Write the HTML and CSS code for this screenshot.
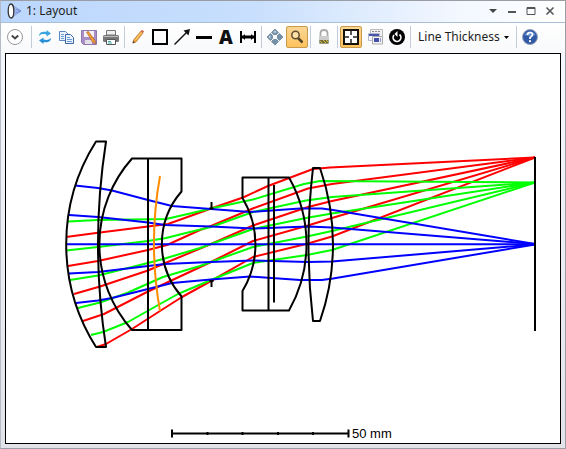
FILE: index.html
```html
<!doctype html>
<html lang="en">
<head>
  <meta charset="utf-8">
  <title>1: Layout</title>
  <link rel="stylesheet" href="styles.css">
</head>
<body>
<div class="window">
  <header class="title-bar">
    <svg class="title-icon" width="16" height="18" viewBox="0 0 16 18" fill="none">
      <path d="M6 3L15 9L6 15M6 6L15 9L6 12M6 9H15" stroke="#7d92d8"/>
      <ellipse cx="5" cy="9" rx="2.800" ry="7" fill="#fff" stroke="#333" stroke-width="1.300"/>
    </svg>
    <h1 class="title">1: Layout</h1>
    <div class="window-buttons">
      <button type="button" aria-label="Window menu"><svg width="10" height="10"><path d="M1 3H9L5 7Z" fill="#444"/></svg></button>
      <button type="button" aria-label="Minimize"><svg width="10" height="10"><path d="M1 6H9" stroke="#555" stroke-width="2"/></svg></button>
      <button type="button" aria-label="Maximize"><svg width="10" height="10"><path d="M1 1.500H9V8.500H1ZM1 2.500H9" fill="none" stroke="#555"/></svg></button>
      <button type="button" aria-label="Close"><svg width="10" height="10"><path d="M1.500 1.500L8.500 8.500M8.500 1.500L1.500 8.500" stroke="#555" stroke-width="1.600"/></svg></button>
    </div>
  </header>

  <div class="toolbar" role="toolbar">
    <button type="button" class="tool expand" aria-label="Settings">
      <svg viewBox="0 0 18 18"><circle cx="9" cy="9" r="7.500" fill="#fff" stroke="#999"/><path d="M5.800 7.500L9 10.500L12.200 7.500" fill="none" stroke="#444" stroke-width="2"/></svg>
    </button>
    <span class="separator"></span>
    <button type="button" class="tool" aria-label="Update">
      <svg viewBox="0 0 18 18"><path d="M3 8C3 4 7 3 10.500 4V2L15 5.500L10.500 8.500V6.500C7 5.500 5 6 3 8Z" fill="#3aa5e0"/><path d="M15 10C15 14 11 15 7.500 14V16L3 12.500L7.500 9.500V11.500C11 12.500 13 12 15 10Z" fill="#2a90d5"/></svg>
    </button>
    <button type="button" class="tool" aria-label="Copy">
      <svg viewBox="0 0 18 18"><g fill="#e9f2fd" stroke="#5b88c4"><path d="M1.500 3.500H7.500L10.500 6.500V12.500H1.500Z"/><path d="M7.500 6.500H12.500L15.500 9.500V15.500H7.500Z" stroke="#3c68aa"/></g><path d="M3 6.500H6M3 8.500H6M3 10.500H6M9 9.500H12M9 11.500H14M9 13.500H14" stroke="#6b9ad5"/></svg>
    </button>
    <button type="button" class="tool" aria-label="Save">
      <svg viewBox="0 0 18 18"><path d="M1.500 2.500H16.500V16.500H3.500L1.500 14.500Z" fill="#a98fc6" stroke="#8f78ae"/><path d="M4 3H14V9H4Z" fill="#f4f0f8"/><path d="M5 12H12V16H5Z" fill="#e4e0e8"/><path d="M6.500 4L8.500 3.500L15 12.500L15.500 16L12.500 14Z" fill="#f39c35" stroke="#a35c26" stroke-width=".6"/></svg>
    </button>
    <button type="button" class="tool" aria-label="Print">
      <svg viewBox="0 0 18 18"><path d="M4.500 2.500H13.500V7H4.500Z" fill="#eee" stroke="#777"/><rect x="1" y="7" width="16" height="7" rx="1.500" fill="#777"/><path d="M2 8.500H16" stroke="#bbb"/><path d="M4.500 11.500H13.500V16.500H4.500Z" fill="#fff" stroke="#555"/><path d="M6 13.500H9M6 15H10" stroke="#3fa9a5"/></svg>
    </button>
    <span class="separator"></span>
    <button type="button" class="tool" aria-label="Pencil">
      <svg viewBox="0 0 18 18"><path d="M4.500 12L12 3L14 5L7 14L4 15Z" fill="#f4a63a" stroke="#a87034" stroke-width=".7"/><path d="M12 3L14 5L15 3.500Q14 1.500 12.700 2Z" fill="#d7654c"/><path d="M4.300 13L5.800 14.300L3.500 15.500Z" fill="#333"/><path d="M6.500 12L12.500 4.500" stroke="#ffd580"/></svg>
    </button>
    <button type="button" class="tool" aria-label="Rectangle">
      <svg viewBox="0 0 18 18"><path d="M2 2H16V16H2Z" fill="none" stroke="#000" stroke-width="2"/></svg>
    </button>
    <button type="button" class="tool" aria-label="Arrow">
      <svg viewBox="0 0 18 18"><path d="M1.500 16.500L14 4" stroke="#111" stroke-width="1.500"/><path d="M17 1L15.500 7.500L10.500 2.500Z" fill="#111"/></svg>
    </button>
    <button type="button" class="tool" aria-label="Line">
      <svg viewBox="0 0 18 18"><path d="M1 9.500H17" stroke="#000" stroke-width="3"/></svg>
    </button>
    <button type="button" class="tool letter">A</button>
    <button type="button" class="tool" aria-label="Dimension">
      <svg viewBox="0 0 18 18"><path d="M2 3V15M16 3V15" stroke="#000" stroke-width="2"/><path d="M2 9H16" stroke="#000" stroke-width="3"/><path d="M3 9L6 6V12ZM15 9L12 6V12Z"/></svg>
    </button>
    <span class="separator"></span>
    <button type="button" class="tool" aria-label="Pan">
      <svg viewBox="0 0 18 18"><path d="M9 1L12.500 4.500L10.500 6.500H7.500L5.500 4.500ZM9 17L12.500 13.500L10.500 11.500H7.500L5.500 13.500ZM1 9L4.500 5.500L6.500 7.500V10.500L4.500 12.500ZM17 9L13.500 5.500L11.500 7.500V10.500L13.500 12.500Z" fill="#7391a9" stroke="#526f86" stroke-width=".6"/><path d="M9 2.500L11 4.500H7ZM2.500 9L4.500 7V11Z" fill="#c7dbea"/></svg>
    </button>
    <button type="button" class="tool active" aria-label="Zoom" aria-pressed="true">
      <svg viewBox="0 0 18 18"><path d="M10 10L14.500 14.500" stroke="#554126" stroke-width="2.500"/><circle cx="7.500" cy="7" r="3.700" fill="#ffe1a5" stroke="#5f4d35" stroke-width="1.500"/></svg>
    </button>
    <span class="separator"></span>
    <button type="button" class="tool" aria-label="Lock">
      <svg viewBox="0 0 18 18"><path d="M5.500 9V5Q5.500 2 9 2Q12.500 2 12.500 5V9" fill="none" stroke="#aaa" stroke-width="1.800"/><rect x="4" y="8" width="10" height="8" rx="1" fill="#ccc"/><path d="M4.500 12H13.500V15.500H4.500Z" fill="#716b3b"/><path d="M5 13L7 15M8 12L11 15M11 12L13 14" stroke="#d8c444"/></svg>
    </button>
    <span class="separator"></span>
    <button type="button" class="tool active" aria-label="Fit window" aria-pressed="true">
      <svg viewBox="0 0 18 18"><path d="M2 2H16V16H2Z" fill="#fff" stroke="#16120a" stroke-width="2"/><path d="M9 2V7M9 11V16M2 9H7M11 9H16" stroke="#222" stroke-width="1.500"/></svg>
    </button>
    <button type="button" class="tool windows" aria-label="Windows">
      <svg viewBox="0 0 18 18"><path d="M4.500 1.500H16.500V8.500H4.500Z" fill="#f2f2f6" stroke="#bbb"/><path d="M6 3.500H15" stroke="#888" stroke-dasharray="2 1"/><path d="M2.500 5.500H13.500V12.500H2.500Z" fill="#f6f7fc" stroke="#b4b8cc"/><path d="M3 6H13V8H3Z" fill="#4855b0"/><path d="M6.500 8.500H16.500V16H6.500Z" fill="#f2f3fb" stroke="#aaa"/><path d="M8 10H13V14H8Z" fill="#4450a8"/><path d="M14 10H15V14H14Z" fill="#8d94cc"/></svg>
    </button>
    <button type="button" class="tool" aria-label="Reset">
      <svg viewBox="0 0 18 18"><circle cx="9" cy="9" r="8"/><path d="M6 7A3.900 3.900 0 1 0 11.500 6.500" fill="none" stroke="#fff" stroke-width="1.700"/><path d="M9.500 3V9L6.500 6Z" fill="#fff"/></svg>
    </button>
    <span class="separator"></span>
    <button type="button" class="thickness">Line Thickness<svg width="5" height="3"><path d="M0 0H5L2.500 3Z"/></svg></button>
    <span class="separator"></span>
    <button type="button" class="tool" aria-label="Help">
      <svg viewBox="0 0 18 18"><circle cx="9" cy="9" r="7.500" fill="#3159a7" stroke="#99a5ba"/><path d="M3.500 7A6 6 0 0 1 14.500 7Q9 9 3.500 7Z" fill="#6d93d3"/><path d="M6.500 7Q6.500 4.500 9 4.500Q11.500 4.500 11.500 6.700Q11.500 8 9 9.500V11" fill="none" stroke="#fff" stroke-width="1.700"/><circle cx="9" cy="13.200" r="1.100" fill="#fff"/></svg>
    </button>
  </div>

  <main class="plot">
    <svg class="layout-plot" viewBox="6 54 554 389" fill="none" stroke-width="2" stroke-linejoin="round">
      <!-- full field -->
      <g stroke="#f00">
        <path d="M66 237L100 232.500L148 226.500L168 224L200 212.500L211 208.500L243 197.500L268 186L313 169L330 167.500L535 157.500"/>
        <path d="M68 266L98 261L148 250L167 245L200 230L211 226L254 208L308 188.500L332 184L535 157.500"/>
        <path d="M74 294L100 286.500L148 270.500L163 264L211 244L253 225.500L308 207L332 201L535 157.500"/>
        <path d="M83 321L104 314L147 292L165 283.500L211 262L253 241L308 225.500L332 218L535 157.500"/>
        <path d="M97 347L106 344L132 329L160 311L182 297L211 281L253 257L308 243.500L332 236.500L535 157.500"/>
      </g>
      <!-- mid field -->
      <g stroke="#0f0">
        <path d="M68 221.500L98 220L166 219L190 213.500L211 208.500L253 199.500L304 184L320 181L535 182.500"/>
        <path d="M66 250.500L98 247L148 241L166 238L190 232L211 227L253 212L306 200.500L332 197L535 182.500"/>
        <path d="M70 280L98 275.500L148 263L163 259L200 248L211 244L253 229L306 218L332 213.500L535 182.500"/>
        <path d="M78 308L100 302.500L127 293L163 277L200 266L211 262L253 247L307 236.500L332 231L535 182.500"/>
        <path d="M91 335L103 332L128 322L160 304L178 294L211 280L253 263L307 255L332 250L535 182.500"/>
      </g>
      <!-- on-axis field -->
      <g stroke="#00f">
        <path d="M75 185.500L98 188L112 190.500L148 200L172 206L211 209L250 212L300 208.500L322 208.500L333 210L535 244"/>
        <path d="M69 215L98 217L148 222.500L165 225L211 226.500L253 228.500L308 226.500L332 227.500L535 244"/>
        <path d="M66 244.300H535"/>
        <path d="M69 273.500L98 272L148 266L165 264L211 262L253 260.500L308 262L332 261.500L535 244.500"/>
        <path d="M76 303L98 300.500L112 298L148 289L172 283L211 279.500L250 276.500L300 280L322 280L333 278.500L535 244.500"/>
      </g>
      <path d="M160 176A382 382 0 0 0 160 311" stroke="#ff8c00"/>
      <!-- lens elements, stop and image plane -->
      <g stroke="#000">
        <path d="M106 141.500H96A192 192 0 0 0 96 347H106A667 667 0 0 1 106 141.500Z"/>
        <path d="M181.500 158.500H132A129 129 0 0 0 132 330H181.500V296.500A80 80 0 0 1 181.500 191.500ZM148 158.500V330"/>
        <path d="M242.500 177.500H289A135 135 0 0 1 289 310.500H242.500V291A90 90 0 0 0 242.500 198ZM268.500 177.500V310.500M274 185V302.500"/>
        <path d="M313 168H320A232 232 0 0 1 320 321H313A652 652 0 0 1 313 168Z"/>
        <path d="M211.500 202V209M209.500 208.500H213.500M211.500 287V280M209.500 281H213.500"/>
        <path d="M535 157V331"/>
        <path d="M172 433.500H349M172 429.500V437.500M348.500 429.500V437.500M207.500 432V435M242.500 432V435M278 432V435M313 432V435"/>
      </g>
      <text class="scale-label" x="352" y="438">50 mm</text>
    </svg>
  </main>
</div>
</body>
</html>
```
FILE: styles.css
```css
* {
  box-sizing: border-box;
}
html,
body {
  height: 100%;
  margin: 0;
}
body {
  font: 12px/16px "Noto Sans", sans-serif;
  color: #1e1e1e;
}
button {
  background: none;
  border: 0;
  color: inherit;
  font: inherit;
  padding: 0;
}
.window {
  background: linear-gradient(#fff, #f4f7fc 52px, #e2e3e8);
  border: 1px solid #9a9da3;
  border-left-color: #b5bcc8;
  display: flex;
  flex-direction: column;
  min-height: 100%;
}
/* title bar */
.title-bar {
  align-items: center;
  background: linear-gradient(90deg, #bcd7fd, #c8dffd 45%, #f2f7ff 80%, #fff);
  border-bottom: 1px solid #a9bfd8;
  display: flex;
  height: 22px;
  padding: 0 10px 2px 5px;
}
.title {
  flex-grow: 1;
  font-size: 12px;
  font-weight: normal;
  margin: 0 0 0 4px;
}
.window-buttons {
  display: flex;
  gap: 9px;
}
.window-buttons svg {
  display: block;
}
/* toolbar */
.toolbar {
  align-items: center;
  background: linear-gradient(#fff, #f8f9fb);
  display: flex;
  height: 30px;
  padding: 0 3px 2px;
}
.tool {
  align-items: center;
  display: flex;
  flex-shrink: 0;
  height: 22px;
  justify-content: center;
  width: 22px;
}
.tool svg {
  flex-shrink: 0;
  height: 18px;
  width: 18px;
}
.expand {
  margin-right: 3px;
}
.windows {
  margin-left: 2px;
}
.active {
  background: linear-gradient(#fbd795, #fdc25d);
  border: 1px solid #c99a4b;
  border-radius: 2px;
}
.letter {
  color: #111;
  font: 800 19px/22px "Open Sans", sans-serif;
}
.separator {
  background: #c3ccd8;
  flex-shrink: 0;
  height: 22px;
  margin: 0 2px;
  width: 1px;
}
.thickness {
  align-items: center;
  display: flex;
  gap: 4px;
  padding: 0 5px;
  white-space: nowrap;
}
/* drawing area */
.plot {
  background: #fff;
  border: 1px solid #000;
  display: flex;
  flex-grow: 1;
  margin: 0 4px 4px;
}
.layout-plot {
  flex-grow: 1;
  width: 100%;
}
.scale-label {
  fill: #000;
  font: 13px "Liberation Sans", sans-serif;
  stroke: none;
}
```
